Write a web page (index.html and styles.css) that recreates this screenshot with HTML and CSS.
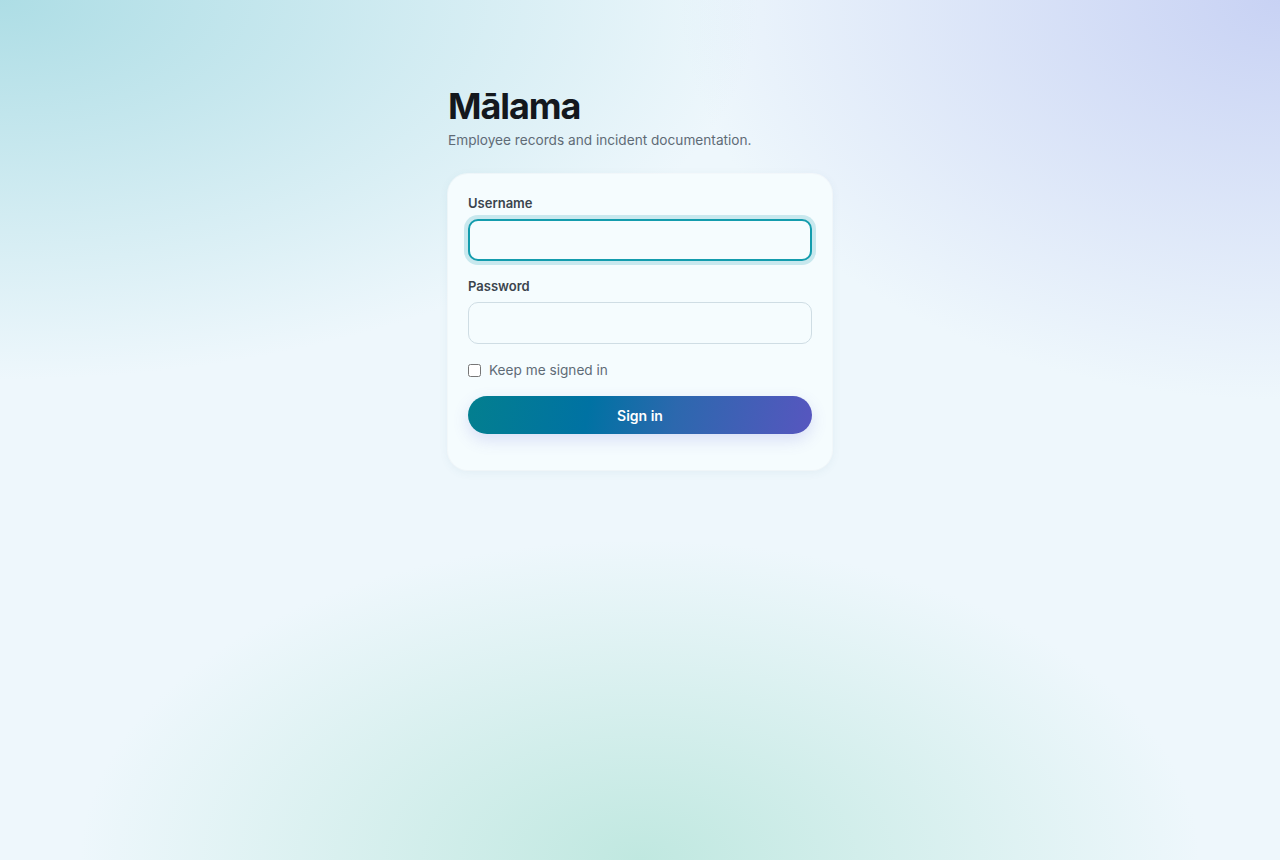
FILE: index.html
```html
<!DOCTYPE html>
<html lang="en">
<head>
    <meta charset="UTF-8">
    <meta name="viewport" content="width=device-width, initial-scale=1.0">
    <title>Mālama — Sign in</title>
    <link rel="stylesheet" href="styles.css">
</head>
<body>
    <main class="login">
        <!-- Brand -->
        <h1 class="brand">Mālama</h1>
        <p class="tagline">Employee records and incident documentation.</p>

        <!-- Sign in card -->
        <form class="card" onsubmit="return false;">
            <label class="field-label" for="username">Username</label>
            <input class="field-input" id="username" type="text" autocomplete="username" autofocus>

            <label class="field-label" for="password">Password</label>
            <input class="field-input" id="password" type="password" autocomplete="current-password">

            <label class="remember">
                <input type="checkbox" id="remember">
                <span>Keep me signed in</span>
            </label>

            <button class="signin-btn" type="submit">Sign in</button>
        </form>
    </main>
</body>
</html>
```

FILE: styles.css
```css
html, body {
    height: 100%;
}

body {
    margin: 0;
    font-family: 'Inter', 'Noto Sans', sans-serif;
    color: #14181d;
    background-color: #eef7fc;
    background-image:
        radial-gradient(ellipse 760px 380px at 0% 0%, rgba(170, 220, 228, 0.95), rgba(170, 220, 228, 0) 100%),
        radial-gradient(ellipse 600px 400px at 100% 0%, rgba(200, 210, 244, 1), rgba(200, 210, 244, 0) 100%),
        radial-gradient(ellipse 560px 320px at 50% 100%, rgba(192, 232, 224, 1), rgba(192, 232, 224, 0) 100%);
    background-repeat: no-repeat;
}

.login {
    width: 384px;
    margin: 0 auto;
    padding-top: 84px;
}

.brand {
    margin: 0;
    font-size: 36px;
    font-weight: 700;
    letter-spacing: -1.1px;
    line-height: 44px;
    color: #14181d;
}

.tagline {
    margin: 2px 0 0;
    font-size: 13.65px;
    line-height: 20px;
    color: #5f6b76;
}

.card {
    display: flex;
    flex-direction: column;
    margin-top: 24px;
    padding: 20px 20px 36px;
    background: #f5fcfe;
    border-radius: 20px;
    box-shadow: 0 2px 10px rgba(60, 110, 140, 0.08), 0 0 0 1px rgba(255, 255, 255, 0.6);
}

.field-label {
    font-size: 13px;
    font-weight: 600;
    line-height: 18px;
    color: #3b444d;
    margin-bottom: 7px;
}

.field-input {
    box-sizing: border-box;
    height: 42px;
    width: 100%;
    padding: 0 12px;
    margin-bottom: 16px;
    font: inherit;
    font-size: 14px;
    background: #f5fcfe;
    border: 1px solid #cfdde4;
    border-radius: 10px;
    outline: none;
}

.field-input:focus {
    border: 2px solid #139cad;
    box-shadow: 0 0 0 4px rgba(19, 156, 173, 0.2);
}

.remember {
    display: flex;
    align-items: center;
    gap: 8px;
    height: 20px;
    font-size: 13.65px;
    color: #5f6b76;
}

.remember input {
    margin: 0;
    width: 13px;
    height: 13px;
}

.signin-btn {
    margin-top: 16px;
    height: 38px;
    border: none;
    border-radius: 999px;
    font: inherit;
    font-size: 14px;
    font-weight: 600;
    color: #fff;
    background: linear-gradient(100deg, #037f8f 0%, #0072a3 35%, #2c68ae 60%, #5756bf 100%);
    box-shadow: 0 6px 16px rgba(88, 90, 210, 0.18);
    cursor: pointer;
}
```
